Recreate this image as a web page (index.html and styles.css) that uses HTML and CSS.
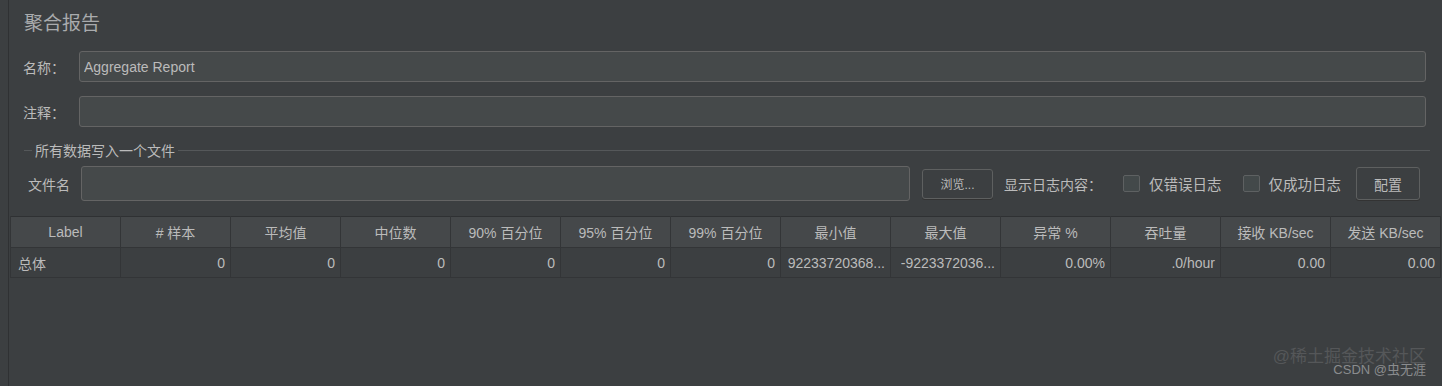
FILE: index.html
```html
<!DOCTYPE html>
<html lang="zh">
<head>
    <meta charset="UTF-8">
    <title>聚合报告</title>
    <link rel="stylesheet" href="styles.css">
</head>
<body>
    <div class="side"></div>
    <div class="panel">
        <div class="title">聚合报告</div>

        <div class="row">
            <label class="lbl">名称：</label>
            <input class="field" type="text" value="Aggregate Report">
        </div>
        <div class="row">
            <label class="lbl">注释：</label>
            <input class="field" type="text" value="">
        </div>

        <fieldset class="group">
            <legend>所有数据写入一个文件</legend>
            <div class="file-row">
                <label class="lbl-file">文件名</label>
                <input class="field file" type="text">
                <button class="btn browse" type="button">浏览...</button>
                <span class="log-lbl">显示日志内容：</span>
                <label class="check"><span class="box"></span>仅错误日志</label>
                <label class="check"><span class="box"></span>仅成功日志</label>
                <button class="btn cfg" type="button">配置</button>
            </div>
        </fieldset>

        <table class="report">
            <tr>
                <th>Label</th>
                <th># 样本</th>
                <th>平均值</th>
                <th>中位数</th>
                <th>90% 百分位</th>
                <th>95% 百分位</th>
                <th>99% 百分位</th>
                <th>最小值</th>
                <th>最大值</th>
                <th>异常 %</th>
                <th>吞吐量</th>
                <th>接收 KB/sec</th>
                <th>发送 KB/sec</th>
            </tr>
            <tr>
                <td class="left">总体</td>
                <td>0</td>
                <td>0</td>
                <td>0</td>
                <td>0</td>
                <td>0</td>
                <td>0</td>
                <td>92233720368...</td>
                <td>-9223372036...</td>
                <td>0.00%</td>
                <td>.0/hour</td>
                <td>0.00</td>
                <td>0.00</td>
            </tr>
        </table>
    </div>

    <div class="mark">
        <div class="mark1">@稀土掘金技术社区</div>
        <div class="mark2">CSDN @虫无涯</div>
    </div>
</body>
</html>
```

FILE: styles.css
```css
body {
    margin: 0;
    background-color: #3c3f41;
    font-family: "Liberation Sans", "Noto Sans CJK SC", sans-serif;
    color: #bbbbbb;
    display: flex;
    height: 386px;
    overflow: hidden;
    position: relative;
}

.side {
    width: 8px;
    border-right: 1px solid #2f3133;
    background-color: #3c3f41;
    flex-shrink: 0;
}

.panel {
    flex: 1;
    padding: 10px 0 0 0;
}

.title {
    font-size: 19px;
    color: #a9abad;
    padding-left: 15px;
    height: 30px;
    line-height: 28px;
}

.row {
    display: flex;
    align-items: center;
    margin: 11px 0 0 14px;
    width: 1403px;
}

.row + .row {
    margin-top: 14px;
}

.lbl {
    width: 56px;
    font-size: 14px;
}

.field {
    flex: 1;
    height: 31px;
    box-sizing: border-box;
    background-color: #45494a;
    border: 1px solid #646464;
    border-radius: 3px;
    color: #bbbbbb;
    font-family: inherit;
    font-size: 14px;
    padding: 0 4px;
}

.group {
    margin: 13px 0 0 15px;
    width: 1402px;
    border: none;
    border-top: 1px solid #55585a;
    padding: 6px 0 0 4px;
}

.group legend {
    font-size: 14px;
    padding: 0 3px;
    margin-left: 4px;
}

.file-row {
    display: flex;
    align-items: center;
    height: 35px;
}

.lbl-file {
    width: 53px;
    font-size: 14px;
}

.field.file {
    flex: none;
    width: 829px;
    height: 35px;
}

.btn {
    background-color: #3c3f41;
    border: 1px solid #5e6060;
    border-radius: 3px;
    color: #bbbbbb;
    font-family: inherit;
    box-shadow: 0 1px 0 #333;
}

.browse {
    margin-left: 12px;
    width: 71px;
    height: 30px;
    font-size: 12px;
}

.log-lbl {
    margin-left: 11px;
    font-size: 14px;
}

.check {
    display: flex;
    align-items: center;
    margin-left: 21px;
    font-size: 14.5px;
}

.box {
    width: 15px;
    height: 15px;
    border: 1px solid #5e6162;
    border-radius: 2px;
    background-color: #43494a;
    margin-right: 9px;
}

.cfg {
    margin-left: 15px;
    width: 64px;
    height: 33px;
    font-size: 14px;
}

.report {
    margin: 15px 0 0 1px;
    border-collapse: collapse;
    width: 1431px;
    table-layout: fixed;
    font-size: 14px;
    border-top: 1px solid #2f3133;
}

.report th {
    height: 30px;
    padding: 0;
    font-weight: normal;
    background-color: #45484a;
    border: 1px solid #333537;
    border-top: none;
    color: #bbbbbb;
}

.report td {
    height: 29px;
    text-align: right;
    padding: 0 5px;
    border: 1px solid #333537;
    border-top: none;
    white-space: nowrap;
    overflow: hidden;
}

.report td.left {
    text-align: left;
    padding-left: 7px;
}

.mark {
    position: absolute;
    right: 16px;
    bottom: 8px;
    text-align: right;
}

.mark1 {
    font-size: 17px;
    color: #555759;
}

.mark2 {
    font-size: 13px;
    color: #8a8c8e;
    margin-top: -8px;
}
```
